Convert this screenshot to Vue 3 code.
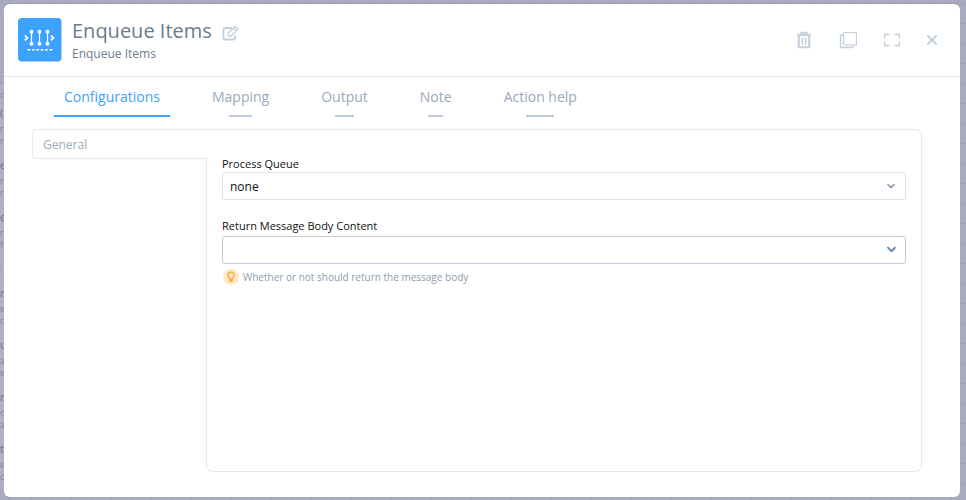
<template>
  <div class="page">
    <div class="backdrop" aria-hidden="true">
      <div class="filter">c</div>
      <div v-for="(item, index) in activities" :key="index" class="activity">
        <strong>{{ item[0] }}</strong>
        <span>{{ item[1] }}</span>
        <span>{{ item[2] }}</span>
      </div>
      <div class="section-label">:</div>
      <div v-for="(item, index) in moreActivities" :key="index" class="activity">
        <strong>{{ item[0] }}</strong>
        <span>{{ item[1] }}</span>
        <span>{{ item[2] }}</span>
      </div>
    </div>

    <section class="dialog" role="dialog" aria-labelledby="dialog-title">
      <header class="dialog-header">
        <svg class="logo" viewBox="0 0 44 44" aria-hidden="true">
          <rect width="43.5" height="43.5" rx="4" fill="#3da2ff" />
          <g stroke="#fff" fill="none">
            <path d="M13.5 14v12M21.5 14v12M29.5 14v12" stroke-width="1.2" />
            <path d="M6.8 17.6l2.6 2.4-2.6 2.4M32.8 17.6l2.6 2.4-2.6 2.4" stroke-width="1.7" />
            <path d="M9.5 31.7h25" stroke-width="1.6" stroke-dasharray="2.8 1.6" />
          </g>
          <g fill="#fff">
            <circle cx="13.5" cy="13.7" r="2" />
            <circle cx="21.5" cy="13.7" r="2" />
            <circle cx="29.5" cy="13.7" r="2" />
            <circle cx="13.5" cy="25.8" r="2" />
            <circle cx="21.5" cy="25.8" r="2" />
            <circle cx="29.5" cy="25.8" r="2" />
          </g>
        </svg>
        <div class="heading">
          <div class="title-row">
            <h1 id="dialog-title">Enqueue Items</h1>
            <button class="icon-button" type="button" aria-label="Edit name">
              <svg width="18" height="16" viewBox="0 0 18 16" fill="none" stroke="#c3cfdb" stroke-width="1.8">
                <path d="M10 3H3.5Q1.5 3 1.5 5V12.5Q1.5 14.5 3.5 14.5H11Q13 14.5 13 12.5V10.5" />
                <path d="M6.3 8.3L13.2 1.4L16 4.2L9.1 11H6.3Z M11.4 3.2L14.2 6" stroke-width="1.4" />
              </svg>
            </button>
          </div>
          <p>Enqueue Items</p>
        </div>
        <div class="tools">
          <button class="icon-button" type="button" aria-label="Delete">
            <svg width="16" height="18" viewBox="0 0 16 18" fill="none" stroke="#c3cfdb">
              <path d="M1 4H15" stroke-width="2.2" />
              <path d="M4.6 3.2L5.4 1.8H10.6L11.4 3.2" stroke-width="2" />
              <path d="M2.8 5V16.2H13.2V5" stroke-width="2" />
              <path d="M6.4 6.5V14M9.6 6.5V14" stroke-width="1.6" />
            </svg>
          </button>
          <button class="icon-button" type="button" aria-label="Duplicate">
            <svg width="18" height="18" viewBox="0 0 18 18" fill="none" stroke="#c3cfdb" stroke-width="1.2">
              <rect x="4.5" y="1.5" width="13" height="12.5" rx="1" />
              <path d="M4 4H2.5Q1.5 4 1.5 5V15.5Q1.5 16.5 2.5 16.5H13Q14 16.5 14 15.5V14" stroke-width="1.4" />
            </svg>
          </button>
          <button class="icon-button" type="button" aria-label="Full screen">
            <svg width="18" height="14" viewBox="0 0 18 14" fill="none" stroke="#c3cfdb" stroke-width="1.4">
              <path d="M1.5 5.5V1.5H6.5M11.5 1.5H16.5V5.5M16.5 8.5V12.5H11.5M6.5 12.5H1.5V8.5" />
            </svg>
          </button>
          <button class="icon-button close" type="button" aria-label="Close">
            <svg width="12" height="12" viewBox="0 0 12 12" fill="none" stroke="#c3cfdb" stroke-width="2">
              <path d="M1.3 1.3L10.7 10.7M10.7 1.3L1.3 10.7" />
            </svg>
          </button>
        </div>
      </header>

      <nav class="tabs" role="tablist">
        <button
          v-for="tab in tabs"
          :key="tab"
          type="button"
          role="tab"
          class="tab"
          :class="{ active: activeTab === tab }"
          :aria-selected="activeTab === tab"
          @click="activeTab = tab"
        >
          {{ tab }}
        </button>
      </nav>

      <div class="content">
        <button class="side-tab" type="button">General</button>
        <form class="panel" @submit.prevent>
          <div class="field">
            <label for="queue">Process Queue</label>
            <div class="select-box">
              <select id="queue" v-model="queue">
                <option>none</option>
              </select>
              <svg class="chevron" width="10" height="8" viewBox="0 0 10 8" fill="none" stroke="#7b8fa5" stroke-width="1.3">
                <path d="M1.5 2.2L5 5.5L8.5 2.2" />
              </svg>
            </div>
          </div>
          <div class="field strong">
            <label for="return-body">Return Message Body Content</label>
            <div class="select-box">
              <select id="return-body" v-model="returnBody">
                <option value=""></option>
                <option>true</option>
                <option>false</option>
              </select>
              <svg class="chevron" width="10" height="8" viewBox="0 0 10 8" fill="none" stroke="#6d8298" stroke-width="1.8">
                <path d="M1.5 1.2L5.5 5.2L9.5 1.2" />
              </svg>
            </div>
            <p class="hint">
              <svg width="16" height="16" viewBox="0 0 16 16" aria-hidden="true">
                <circle cx="8" cy="8" r="8" fill="#ffe8cc" />
                <path d="M6.6 10.2V9.2C5.4 8.5 4.8 7.7 4.8 6.5A3.2 3.2 0 0 1 11.2 6.5C11.2 7.7 10.6 8.5 9.4 9.2V10.2Z" fill="#ffe8cc" stroke="#ffad42" stroke-width="1.5" />
                <path d="M6.2 10H9.8V12.2L9 13H7L6.2 12.2Z" fill="#ffad42" />
              </svg>
              Whether or not should return the message body
            </p>
          </div>
        </form>
      </div>
    </section>
  </div>
</template>

<script setup>
import { ref } from 'vue'

const tabs = ['Configurations', 'Mapping', 'Output', 'Note', 'Action help']
const activeTab = ref('Configurations')
const queue = ref('none')
const returnBody = ref('')

const activities = [
  ['(', 'n', 'n'],
  ['e', 'n', 'o'],
  ['e', 'n', 'f']
]

const moreActivities = [
  ['n', 'e', 'c'],
  ['u', 'a', 'e'],
  ['n', 'o', 'a'],
  ['t', 'e', 'c']
]
</script>

<style>
body {
  margin: 0;
}
</style>

<style scoped>
* {
  box-sizing: border-box;
}

.page {
  position: relative;
  display: flex;
  min-height: 100vh;
  padding: 4px 6px 3px 4px;
  overflow: hidden;
  font-family: "Open Sans", "Noto Sans", sans-serif;
  background-color: #a9a9c0;
  background-image:
    linear-gradient(#a1a2ba 1px, transparent 1px),
    linear-gradient(90deg, #a1a2ba 1px, transparent 1px);
  background-size: 20px 20px;
  background-position: 11px 3px;
}

.backdrop {
  position: absolute;
  top: 83px;
  bottom: 13px;
  left: 0;
  width: 12px;
  background: #b0b0c3;
  color: #8588a1;
  font-size: 9px;
}

.filter {
  height: 20px;
  line-height: 22px;
  border-top: 1px solid #9a9db3;
}

.section-label {
  height: 24px;
  line-height: 16px;
}

.activity {
  display: flex;
  flex-direction: column;
  height: 52px;
  line-height: 12px;
}

.activity strong {
  font-size: 11px;
  font-weight: 400;
  line-height: 20px;
  color: #6b708c;
}

.dialog {
  position: relative;
  display: flex;
  flex: 1;
  flex-direction: column;
  min-width: 0;
  background: #fff;
  border-radius: 6px;
}

button {
  padding: 0;
  font-family: inherit;
  background: none;
  border: none;
  cursor: pointer;
}

.dialog-header {
  display: flex;
  align-items: center;
  height: 73px;
  padding: 0 22px 0 14px;
  border-bottom: 1px solid #e3eaf1;
}

.logo {
  flex: none;
  width: 44px;
  height: 44px;
}

.heading {
  flex: 1;
  margin-left: 10px;
  color: #6c7c8e;
}

.title-row {
  display: flex;
  align-items: center;
  gap: 10px;
}

h1 {
  margin: 0;
  font-size: 20px;
  font-weight: 400;
  line-height: 28px;
}

.title-row .icon-button {
  padding-top: 4px;
}

.heading p {
  margin: 0;
  font-size: 12px;
  line-height: 18px;
}

.icon-button {
  display: flex;
  align-items: center;
  justify-content: center;
}

.tools {
  display: flex;
  align-items: center;
  gap: 24px;
}

.tools .icon-button {
  width: 20px;
}

.tools .close {
  width: 12px;
}

.tabs {
  display: flex;
  gap: 32px;
  padding: 0 50px;
}

.tab {
  position: relative;
  height: 40px;
  padding: 0 10px;
  font-size: 14px;
  line-height: 40px;
  color: #9aaaba;
}

.tab::after {
  position: absolute;
  bottom: 0;
  left: 35%;
  width: 30%;
  height: 2px;
  content: "";
  background: #c0ccd8;
}

.tab.active {
  color: #3da2ff;
}

.tab.active::after {
  left: 0;
  width: 100%;
  background: #3da2ff;
}

.content {
  display: flex;
  flex: 1;
  align-items: flex-start;
  padding: 12px 38px 25px 28px;
}

.side-tab {
  z-index: 1;
  flex: none;
  width: 175px;
  height: 30px;
  margin-right: -1px;
  padding: 0 10px;
  font-size: 12px;
  color: #9aaaba;
  text-align: left;
  background: #fff;
  border: 1px solid #e3eaf1;
  border-right: none;
  border-radius: 5px 0 0 5px;
}

.panel {
  flex: 1;
  align-self: stretch;
  padding: 26px 15px;
  border: 1px solid #e3eaf1;
  border-radius: 0 6px 6px 6px;
}

.field {
  margin-bottom: 18px;
}

label {
  display: block;
  font-size: 11px;
  line-height: 16px;
  color: #111;
}

.select-box {
  position: relative;
}

select {
  display: block;
  width: 100%;
  height: 28px;
  padding: 0 7px;
  font-family: inherit;
  font-size: 12px;
  color: #111;
  appearance: none;
  background: #fff;
  border: 1px solid #dce1e7;
  border-radius: 3px;
  outline: none;
}

.strong label {
  padding-bottom: 2px;
}

.strong select {
  border-color: #bfcbd6;
}

.chevron {
  position: absolute;
  top: 10px;
  right: 10px;
  pointer-events: none;
}

.hint {
  display: flex;
  align-items: center;
  gap: 4px;
  margin: 5px 1px;
  font-size: 10px;
  line-height: 16px;
  color: #8d9db0;
}
</style>
